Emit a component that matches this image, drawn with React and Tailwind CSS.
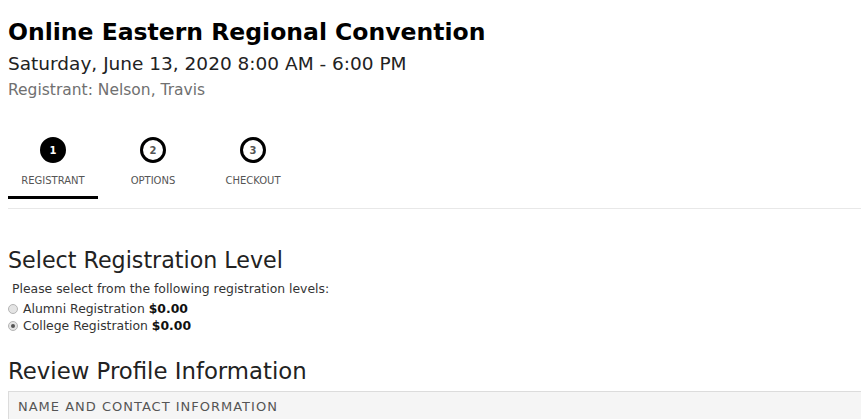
import React, { useState } from "react";

const steps = [
  { n: 1, label: "REGISTRANT", active: true },
  { n: 2, label: "OPTIONS" },
  { n: 3, label: "CHECKOUT" },
];

const levels = [
  { id: "alumni", label: "Alumni Registration", price: "$0.00" },
  { id: "college", label: "College Registration", price: "$0.00" },
];

const App = () => {
  const [level, setLevel] = useState("college");

  return (
    <div className="min-h-[419px] bg-white pl-2 pt-[16px] font-['DejaVu_Sans',sans-serif] text-[#222] overflow-hidden">
      {/* Event header */}
      <h1 className="text-[23.5px] font-bold leading-[32px] text-black">
        Online Eastern Regional Convention
      </h1>
      <p className="mt-[4px] text-[18.5px] leading-[24px] text-[#222]">
        Saturday, June 13, 2020 8:00 AM - 6:00 PM
      </p>
      <p className="mt-[4px] text-[15.5px] leading-[20px] text-[#707070]">
        Registrant: Nelson, Travis
      </p>

      {/* Steps */}
      <div className="mt-[37px] border-b border-[#e8e8e8] pb-[9px]">
        <div className="flex gap-[10px]">
          {steps.map((s) => (
            <div
              key={s.n}
              className={`flex w-[90px] flex-col items-center pb-[8px] border-b-[3px] ${
                s.active ? "border-black" : "border-transparent"
              }`}
            >
              <div
                className={`flex h-[26px] w-[26px] items-center justify-center rounded-full border-[3px] border-black text-[10px] font-bold ${
                  s.active ? "bg-black text-white" : "bg-white text-[#555]"
                }`}
              >
                {s.n}
              </div>
              <span className="mt-[11px] text-[10px] leading-[14px] text-[#555]">
                {s.label}
              </span>
            </div>
          ))}
        </div>
      </div>

      {/* Registration level */}
      <h2 className="mt-[37px] text-[22.2px] leading-[28px] text-[#222]">
        Select Registration Level
      </h2>
      <p className="mt-[7px] pl-[4px] text-[12.4px] leading-[16px] text-[#333]">
        Please select from the following registration levels:
      </p>
      <div className="mt-[3px] flex flex-col">
        {levels.map((l) => (
          <label
            key={l.id}
            onClick={() => setLevel(l.id)}
            className="flex h-[17px] cursor-pointer items-center gap-[5px] text-[12.4px] leading-[17px] text-[#333]"
          >
            <span className="flex h-[10px] w-[10px] items-center justify-center rounded-full border border-[#b5b5b5] bg-[#e4e4e4]">
              {level === l.id && <span className="h-[4px] w-[4px] rounded-full bg-[#555]" />}
            </span>
            <span>
              {l.label} <b className="text-[#111]">{l.price}</b>
            </span>
          </label>
        ))}
      </div>

      {/* Profile */}
      <h2 className="mt-[23px] text-[22.8px] leading-[28px] text-[#222]">
        Review Profile Information
      </h2>
      <div className="mt-[6px] border-t border-l border-[#dcdcdc] bg-[#f5f5f5] px-[9px] pt-[6px] pb-[8px] text-[13px] leading-[18px] tracking-[1px] text-[#555]">
        NAME AND CONTACT INFORMATION
      </div>
    </div>
  );
};

export default App;
